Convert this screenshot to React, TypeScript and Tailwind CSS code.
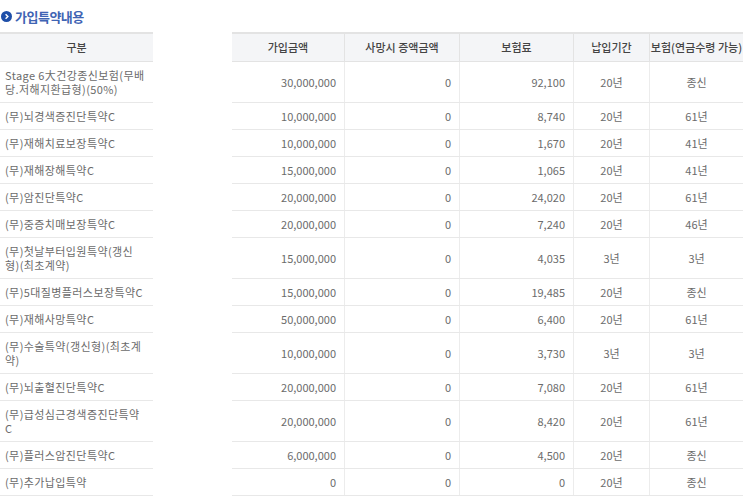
const rows: [string, string, string, string, string, string, boolean][] = [
  ["Stage 6大건강종신보험(무배당.저해지환급형)(50%)", "30,000,000", "0", "92,100", "20년", "종신", true],
  ["(무)뇌경색증진단특약C", "10,000,000", "0", "8,740", "20년", "61년", false],
  ["(무)재해치료보장특약C", "10,000,000", "0", "1,670", "20년", "41년", false],
  ["(무)재해장해특약C", "15,000,000", "0", "1,065", "20년", "41년", false],
  ["(무)암진단특약C", "20,000,000", "0", "24,020", "20년", "61년", false],
  ["(무)중증치매보장특약C", "20,000,000", "0", "7,240", "20년", "46년", false],
  ["(무)첫날부터입원특약(갱신형)(최초계약)", "15,000,000", "0", "4,035", "3년", "3년", true],
  ["(무)5대질병플러스보장특약C", "15,000,000", "0", "19,485", "20년", "종신", false],
  ["(무)재해사망특약C", "50,000,000", "0", "6,400", "20년", "61년", false],
  ["(무)수술특약(갱신형)(최초계약)", "10,000,000", "0", "3,730", "3년", "3년", true],
  ["(무)뇌출혈진단특약C", "20,000,000", "0", "7,080", "20년", "61년", false],
  ["(무)급성심근경색증진단특약C", "20,000,000", "0", "8,420", "20년", "61년", true],
  ["(무)플러스암진단특약C", "6,000,000", "0", "4,500", "20년", "종신", false],
  ["(무)추가납입특약", "0", "0", "0", "20년", "종신", false],
];

export default function App() {
  const font = { fontFamily: '"Noto Sans CJK KR", "Noto Sans", sans-serif' };
  return (
    <div className="w-[743px] h-[498px] bg-white text-[11px] text-[#6b6b6b] overflow-hidden" style={font}>
      <div className="h-[32px] flex items-center gap-[3px] pl-[1px] pt-[1px]">
        <svg width="11" height="11" viewBox="0 0 12 12">
          <circle cx="6" cy="6" r="6" fill="#1f4fa8" />
          <path d="M5 3.5 L7.5 6 L5 8.5" stroke="white" strokeWidth="1.6" fill="none" />
        </svg>
        <span className="text-[13px] font-bold text-[#3f64b4] tracking-[-0.5px]">가입특약내용</span>
      </div>
      <div className="flex">
        <div className="w-[153px]">
          <div className="h-[30px] border-t-2 border-[#b6c4e2] bg-[#f4f5f7] flex items-center justify-center text-[#444] font-medium border-b border-[#e3e3e3]">구분</div>
          {rows.map((r, i) => (
            <div key={i} className={`${r[6] ? "h-[41px]" : "h-[27px]"} border-b border-[#e8e8e8] flex items-center pl-[5px] pr-[8px] leading-[14px] tracking-[0.4px] break-all`}>
              {r[0]}
            </div>
          ))}
        </div>
        <div className="ml-[79px] flex-1">
          <div className="h-[30px] border-t-2 border-[#b6c4e2] bg-[#f4f5f7] flex text-[#444] font-medium border-b border-[#e3e3e3]">
            <div className="w-[113px] flex items-center justify-center border-r border-[#e3e3e3]">가입금액</div>
            <div className="w-[115px] flex items-center justify-center border-r border-[#e3e3e3]">사망시 증액금액</div>
            <div className="w-[114px] flex items-center justify-center border-r border-[#e3e3e3]">보험료</div>
            <div className="w-[76px] flex items-center justify-center border-r border-[#e3e3e3]">납입기간</div>
            <div className="flex-1 flex items-center justify-center whitespace-nowrap">보험(연금수령 가능)</div>
          </div>
          {rows.map((r, i) => (
            <div key={i} className={`${r[6] ? "h-[41px]" : "h-[27px]"} border-b border-[#e8e8e8] flex`}>
              <div className="w-[113px] flex items-center justify-end pr-[8px] border-r border-[#ececec]">{r[1]}</div>
              <div className="w-[115px] flex items-center justify-end pr-[8px] border-r border-[#ececec]">{r[2]}</div>
              <div className="w-[114px] flex items-center justify-end pr-[8px] border-r border-[#ececec]">{r[3]}</div>
              <div className="w-[76px] flex items-center justify-center border-r border-[#ececec]">{r[4]}</div>
              <div className="flex-1 flex items-center justify-center">{r[5]}</div>
            </div>
          ))}
        </div>
      </div>
    </div>
  );
}
